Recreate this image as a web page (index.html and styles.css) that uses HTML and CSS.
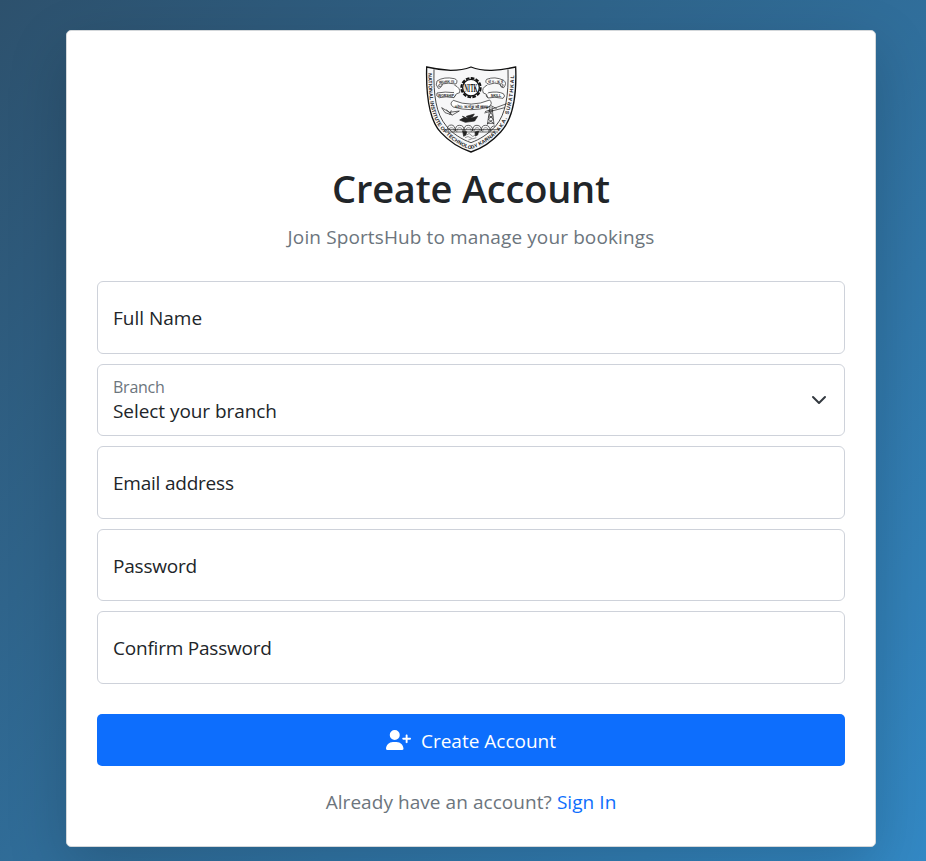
FILE: index.html
```html
<!DOCTYPE html>
<html lang="en">
<head>
<meta charset="utf-8">
<title>Create Account</title>
<link rel="stylesheet" href="styles.css">
</head>
<body>
<main class="card">
  <header class="head">
    <svg class="crest" viewBox="0 0 306 294" role="img" aria-label="Institute crest">
      <defs>
        <path id="leftEdge" d="M25 40C25 112 31 171 65 210C91 240 122 258 151 268C183 258 211 241 238 212"/>
        <path id="rightEdge" d="M236 214C269 178 281 118 283 38"/>
      </defs>
      <path class="shield" d="M20 21Q54 29 92 31Q128 31 153 21Q181 32 215 31Q251 29 287 21C290 93 283 173 242 216C216 245 186 265 153 276C120 265 86 243 63 218C24 177 18 96 20 21Z"/>
      <path class="line inner" d="M42 28C40 106 48 162 79 198C99 222 125 238 153 248C180 238 205 222 227 198C258 162 266 106 264 28"/>
      <text class="rim"><textPath href="#leftEdge" textLength="378">NATIONAL INSTITUTE OF TECHNOLOGY KARNAT</textPath></text>
      <text class="rim"><textPath href="#rightEdge" textLength="178">AKA, SURATHKAL</textPath></text>
      <circle class="gear" cx="153" cy="83" r="29"/>
      <circle class="ring" cx="153" cy="83" r="25"/>
      <text class="mono" x="153" y="96" textLength="40" lengthAdjust="spacingAndGlyphs">NITK</text>
      <g class="line ribbon">
        <path d="M51 63Q72 49 103 56Q116 60 108 72Q83 67 66 72Q64 85 55 85Q45 75 51 63Z"/>
        <path d="M66 72Q55 70 56 79Q69 80 66 72ZM51 99Q75 94 102 98Q111 104 102 113Q77 108 58 113Q46 108 51 99Z"/>
        <path d="M103 75Q122 84 119 98Q108 98 102 112"/>
        <path d="M200 58Q224 48 251 61Q262 69 251 83Q244 86 240 72Q224 66 207 73Q192 68 200 58Z"/>
        <path d="M240 72Q251 69 249 79Q240 81 240 72ZM206 98Q233 93 250 101Q258 108 249 115Q223 109 204 114Q193 107 206 98Z"/>
        <path d="M202 75Q183 84 190 99Q200 99 204 113"/>
        <path d="M100 121Q153 144 209 120Q220 131 206 141Q153 157 100 141Q86 132 100 121Z"/>
      </g>
      <text class="motto" x="57" y="69" textLength="46" transform="rotate(-3 75 67)">WORK IS</text>
      <text class="motto" x="54" y="110" textLength="48" lengthAdjust="spacingAndGlyphs">WORSHIP</text>
      <text class="motto" x="205" y="68" textLength="43">योग:कर्म</text>
      <text class="motto" x="212" y="110" textLength="32">SKILL</text>
      <text class="motto" x="105" y="144" textLength="97" lengthAdjust="spacingAndGlyphs">योग: कर्मसु कौशलम्</text>
      <g class="line">
        <path d="M65 143L88 157L118 153L97 165L75 158ZM94 151L89 164M79 149L97 165"/>
        <path class="solid" d="M119 180L133 172L127 169L143 175L151 170L153 174L173 169L164 183L136 187Z"/>
        <path class="solid" d="M139 169L163 162L157 171L143 174Z"/>
        <path d="M195 155L260 131M193 159L254 143M210 141L202 194M216 141L222 194M207 151L218 166L205 178L221 190M218 151L207 166L220 178L203 190M205 152H220M204 171H220M202 190H222M199 144L213 137L230 146"/>
        <path d="M76 216H234M73 209H239M82 208Q82 195 94 195Q105 195 106 213Q106 195 119 196Q133 196 132 213Q132 195 145 196Q158 196 158 213Q158 195 171 196Q184 196 184 213Q184 195 197 196Q210 196 210 213Q213 196 225 198"/>
        <path class="arches" d="M84 216Q85 203 94 203Q103 203 103 216M110 216Q111 203 119 203Q128 203 128 216M136 216Q137 203 145 203Q154 203 154 216M162 216Q163 203 171 203Q180 203 180 216M188 216Q189 203 197 203Q206 203 206 216"/>
        <path class="solid" d="M128 214L140 215L138 225L131 229ZM165 216L176 213L173 225L166 228Z"/>
        <path class="arches" d="M140 225Q148 216 153 225T165 225M135 233Q145 226 151 233T169 233M145 240L155 237"/>
      </g>
    </svg>
    <h2 class="title"><span>Create Account</span></h2>
    <p class="subtitle">Join SportsHub to manage your bookings</p>
  </header>
  <form class="form">
    <div class="field"><span class="label">Full Name</span></div>
    <div class="field select">
      <span class="stack"><span class="small">Branch</span><span class="branch">Select your branch</span></span>
      <svg class="chevron" viewBox="0 0 16 16"><path d="m2 5 6 6 6-6"/></svg>
    </div>
    <div class="field"><span class="label tight">Email address</span></div>
    <div class="field"><span class="label tight">Password</span></div>
    <div class="field"><span class="label tight">Confirm Password</span></div>
    <button class="submit" type="button">
      <svg class="user" viewBox="0 0 640 512"><path d="M96 128a128 128 0 1 1 256 0A128 128 0 1 1 96 128zM0 482.300C0 383.800 79.800 304 178.300 304h91.400C368.200 304 448 383.800 448 482.300c0 16.400-13.300 29.700-29.700 29.700H29.700C13.300 512 0 498.700 0 482.300zM504 312V248H440c-13.300 0-24-10.700-24-24s10.700-24 24-24h64V136c0-13.300 10.700-24 24-24s24 10.700 24 24v64h64c13.300 0 24 10.700 24 24s-10.700 24-24 24H552v64c0 13.300-10.700 24-24 24s-24-10.700-24-24z"/></svg>
      <span class="action">Create Account</span>
    </button>
  </form>
  <p class="footer">Already have an account? <a class="link" href="#">Sign In</a></p>
</main>
</body>
</html>
```
FILE: styles.css
```css
* { box-sizing: border-box; }
html, body { height: 100%; }
body {
  margin: 0;
  padding: 30px 50px 14px 66px;
  overflow: hidden;
  background: linear-gradient(135deg, #2d516d 0%, #3389c5 100%);
  font-family: "Segoe UI", "Open Sans", "Noto Sans", sans-serif;
  font-size: 19px;
  line-height: 30px;
  color: #212529;
}
.card {
  height: 817px;
  padding: 30px;
  border: 1px solid #d3d7da;
  border-radius: 5px;
  background: #fff;
  box-shadow: 0 20px 60px rgba(0, 0, 0, .175);
}
.head { display: flex; flex-direction: column; align-items: center; height: 220px; }
.crest { width: 102px; height: 98px; margin-top: -1px; flex: none; }
.shield { fill: #f7f7f8; stroke: #111; stroke-width: 4; }
.line { fill: none; stroke: #222; stroke-width: 2.1; stroke-linejoin: round; }
.inner { stroke-width: 2.5; }
.ribbon { fill: #fff; }
.solid { fill: #222; }
.arches { stroke-width: 1.4; }
.rim { font: bold 15.5px "Liberation Sans", sans-serif; fill: #181818; }
.gear { fill: #fff; stroke: #111; stroke-width: 6; stroke-dasharray: 11 4; }
.ring { fill: none; stroke: #111; stroke-width: 4; }
.mono { font: bold 36px "Liberation Serif", serif; text-anchor: middle; fill: #111; }
.motto { font: bold 11px "Liberation Sans", sans-serif; fill: #222; }
.title { margin: 6px 0 0; font-size: 38px; font-weight: 600; line-height: 48px; letter-spacing: -.2px; }
.subtitle { margin: 10px 0 0; color: #6c757d; letter-spacing: .12px; }
.form { display: flex; flex-direction: column; gap: 10px; }
.field {
  display: flex;
  align-items: center;
  height: 72.5px;
  padding: 0 15px;
  border: 1px solid #ced2da;
  border-radius: 6px;
  background: #fff;
}
.label { padding-top: 2px; }
.tight { letter-spacing: -.22px; }
.select { justify-content: space-between; }
.stack { display: flex; flex-direction: column; margin-top: -2px; line-height: 24px; }
.small { font-size: 16px; letter-spacing: -.25px; color: #6c757d; }
.branch { letter-spacing: -.06px; }
.chevron { width: 16px; height: 16px; margin-right: 2px; fill: none; stroke: #343a40; stroke-width: 2; stroke-linecap: round; stroke-linejoin: round; }
.submit {
  display: flex;
  align-items: center;
  justify-content: center;
  gap: 10px;
  height: 52px;
  margin-top: 20px;
  padding: 0;
  border: 0;
  border-radius: 5px;
  background: #0d6efd;
  color: #fff;
  font: inherit;
}
.action { padding-top: 2px; }
.user { width: 25px; height: 20px; margin-top: 1px; fill: #fff; }
.footer { margin: 21px 0 0; text-align: center; color: #6c757d; letter-spacing: .06px; }
.link { color: #0d6efd; text-decoration: none; }
```
